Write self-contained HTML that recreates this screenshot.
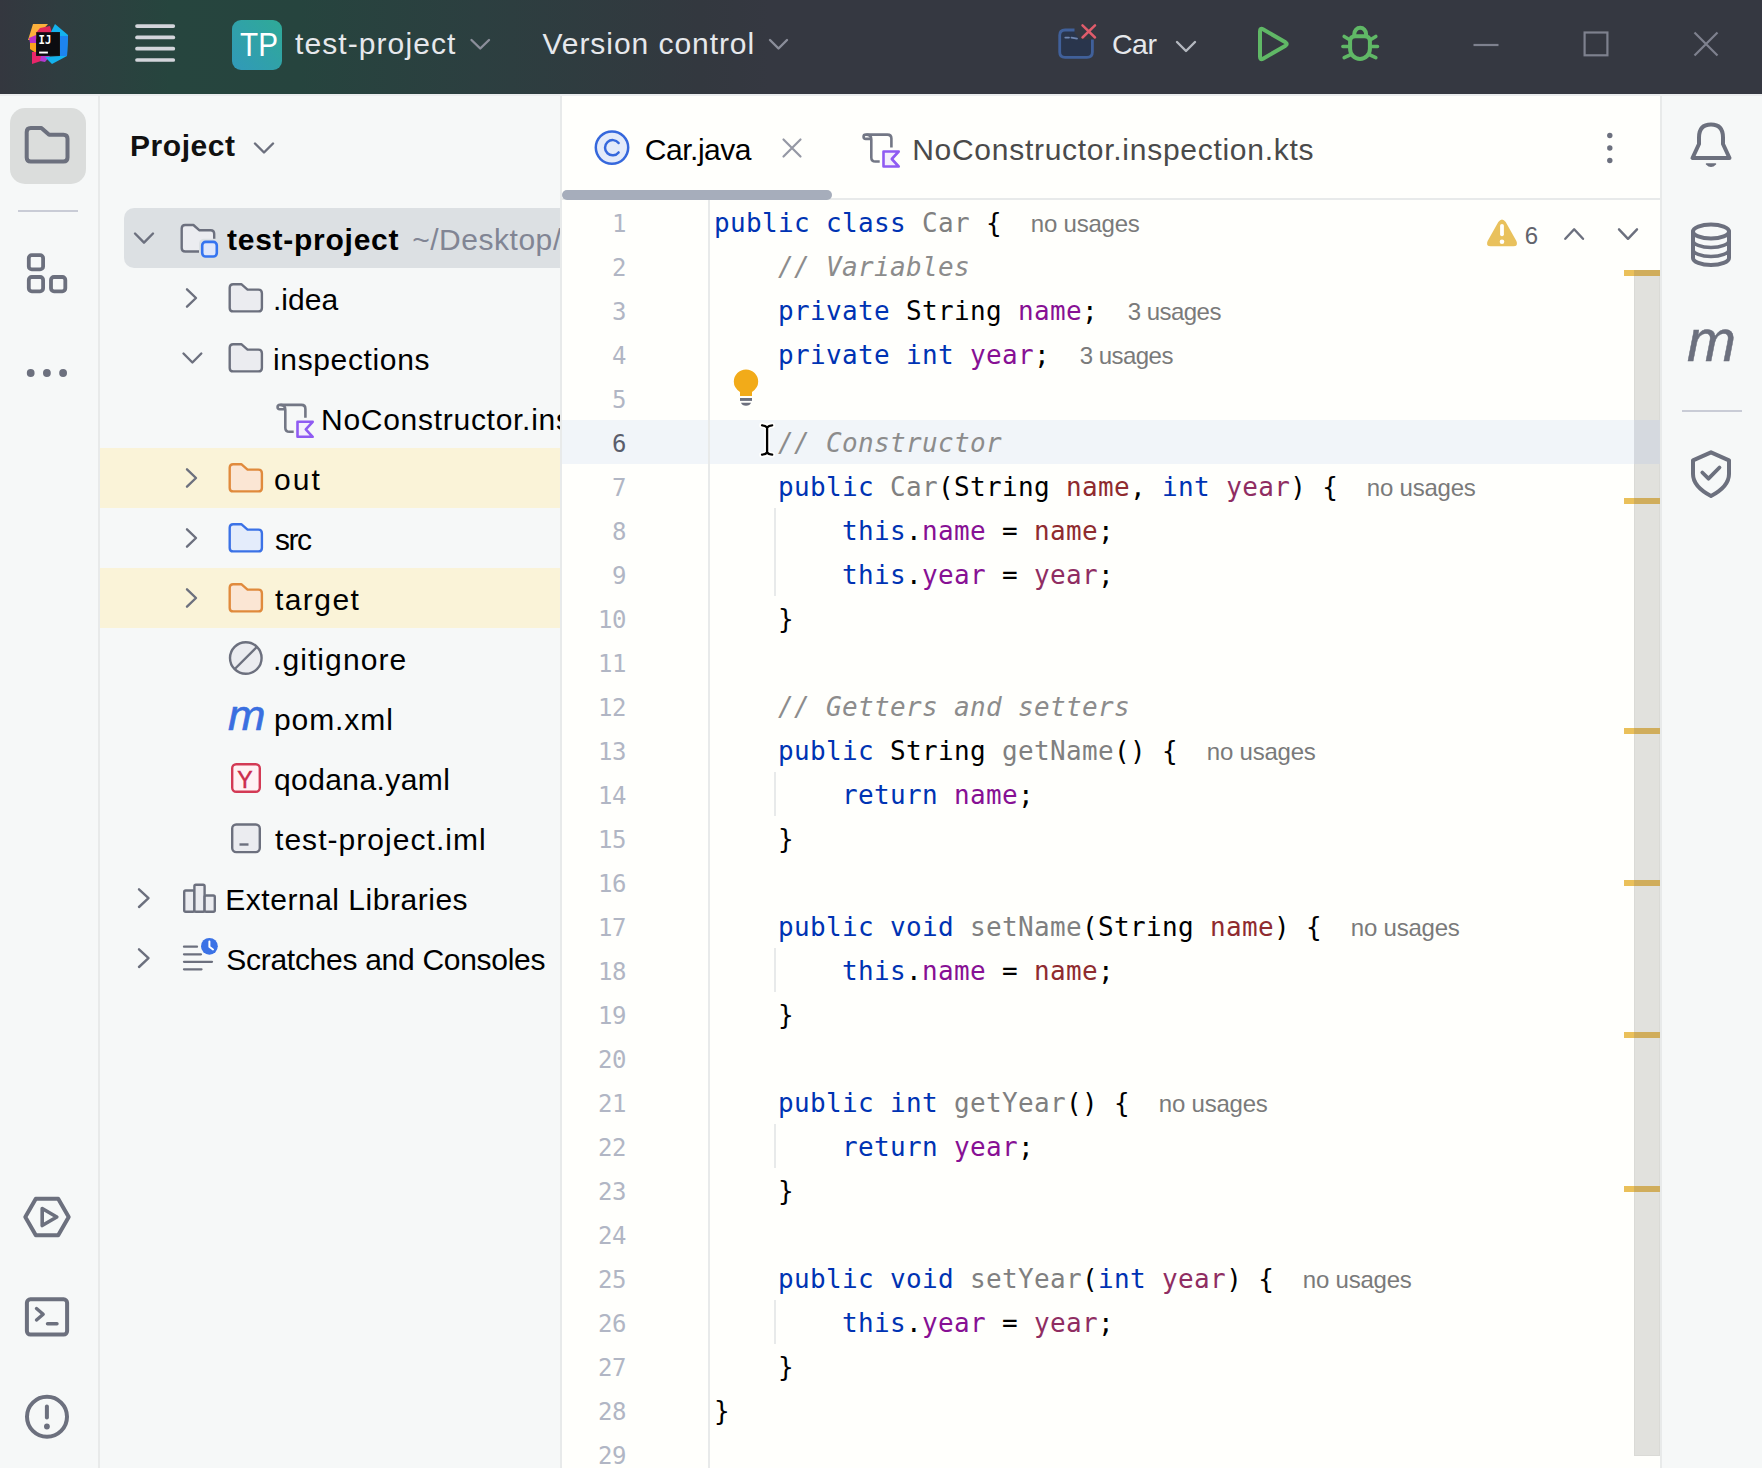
<!DOCTYPE html>
<html lang="en"><head><meta charset="utf-8"><title>test-project – Car.java</title>
<style>
html,body{margin:0;padding:0;}
body{width:1762px;height:1468px;overflow:hidden;position:relative;background:#f6f8f8;font-family:"Liberation Sans","DejaVu Sans",sans-serif;color:#000;}
.a{position:absolute;}
.t{position:absolute;white-space:pre;line-height:1;}
svg{position:absolute;overflow:visible;}
#titlebar{position:absolute;left:0;top:0;width:1762px;height:94px;background:#353841;overflow:hidden;}
#titlebar .grad{position:absolute;left:0;top:0;width:1000px;height:94px;background:linear-gradient(90deg,#34373f 0px,#2f3d40 60px,#26453e 170px,#26443e 300px,#2c3f40 480px,#33383f 700px,#353841 770px);}
.code{position:absolute;left:714px;white-space:pre;line-height:44px;height:44px;font-family:"DejaVu Sans Mono","Liberation Mono",monospace;font-size:26px;letter-spacing:0.348px;color:#000;}
.k{color:#0033b3}.f{color:#871094}.g{color:#808080}.c{color:#8c8c8c;font-style:italic}.pn{color:#8f2b2f}.py{color:#8f2d62}
.ln{position:absolute;white-space:pre;line-height:44px;height:44px;font-family:"DejaVu Sans Mono","Liberation Mono",monospace;font-size:24px;color:#b1b6c4;text-align:right;width:60px;left:566px;margin-top:2px;letter-spacing:-0.4px;}

</style></head><body>
<div id="titlebar"><div class="grad"></div></div>
<svg style="left:27px;top:23px" width="42" height="42" viewBox="27 23 42 42">
<polygon points="33,24 48,24 40,33 36,40 28,40" fill="#fcb03c"/>
<polygon points="30,43 36,43 36,53 30,49" fill="#f9a21c"/>
<polygon points="40,28 50,26 52,33 36,33" fill="#e0285a"/>
<polygon points="29,38 36,35 36,43 30,43" fill="#b830c8"/>
<polygon points="32,52 36,52 36,56 46,56 41,61 32,64" fill="#e8266a"/>
<polygon points="41,56 50,56 45,62 40,61" fill="#b43ad0"/>
<polygon points="55,24 68,35 67,56 52,64 45,57 60,56 60,32 51,32" fill="#14b2ee"/>
<polygon points="60,36 68,36 67,56 60,56" fill="#1d84f0"/>
<rect x="36.2" y="32.2" width="23.6" height="23.6" fill="#0c0c10"/>
<rect x="39.1" y="51.6" width="8.8" height="1.9" fill="#fff"/>
<text x="38.6" y="43.7" font-family="DejaVu Sans Mono,Liberation Mono,monospace" font-weight="bold" font-size="12" fill="#fff" textLength="12.8" lengthAdjust="spacingAndGlyphs">IJ</text>
</svg>
<svg style="left:0;top:0" width="200" height="94"><line x1="137" y1="26.1" x2="173.3" y2="26.1" stroke="#d3d5db" stroke-width="3.7" stroke-linecap="round"/><line x1="137" y1="37.4" x2="173.3" y2="37.4" stroke="#d3d5db" stroke-width="3.7" stroke-linecap="round"/><line x1="137" y1="48.7" x2="173.3" y2="48.7" stroke="#d3d5db" stroke-width="3.7" stroke-linecap="round"/><line x1="137" y1="60" x2="173.3" y2="60" stroke="#d3d5db" stroke-width="3.7" stroke-linecap="round"/></svg>
<div class="a" style="left:232px;top:20px;width:50px;height:50px;border-radius:9px;background:linear-gradient(45deg,#3199b9 0%,#2faa97 100%)"></div>
<div class="t" style='left:239.85px;top:28.00px;font-size:33px;color:#ffffff;transform:scaleX(0.9);transform-origin:left top;'>TP</div>
<div class="t" style='left:295.00px;top:29.00px;font-size:30px;color:#e6e8ec;letter-spacing:1.086px;'>test-project</div>
<div class="t" style='left:542.50px;top:29.00px;font-size:30px;color:#e6e8ec;letter-spacing:0.944px;'>Version control</div>
<svg style="left:0;top:0" width="1762" height="1468"><polyline points="471.5,40 480.25,48.5 489,40" fill="none" stroke="#8b8e9a" stroke-width="2.4" stroke-linecap="round" stroke-linejoin="round"/></svg>
<svg style="left:0;top:0" width="1762" height="1468"><polyline points="770,40 778.5,48.5 787,40" fill="none" stroke="#8b8e9a" stroke-width="2.4" stroke-linecap="round" stroke-linejoin="round"/></svg>
<svg style="left:0;top:0" width="1762" height="94">
<path d="M1074.500 30 L1065 30 Q1059.700 30 1059.700 35.300 L1059.700 52 Q1059.700 57.400 1065 57.400 L1087 57.400 Q1092.400 57.400 1092.400 52 L1092.400 39.500 L1080 39.500 L1074.500 33 Z" fill="#29354c"/>
<path d="M1074.500 30 L1065 30 Q1059.700 30 1059.700 35.300 L1059.700 52 Q1059.700 57.400 1065 57.400 L1087 57.400 Q1092.400 57.400 1092.400 52 L1092.400 39.500" fill="none" stroke="#40609a" stroke-width="2.800" stroke-linecap="butt"/>
<path d="M1065.300 37.600 L1069 37.600 M1071.500 37.600 L1077 38.600" stroke="#6f86b0" stroke-width="1.800" stroke-linecap="round"/>
<path d="M1082.500 25.400 L1095 37.500 M1095 25.400 L1082.500 37.500" stroke="#e05c6b" stroke-width="2.500" stroke-linecap="round"/>
</svg>
<div class="t" style='left:1112.00px;top:30.00px;font-size:28.5px;color:#e6e8ec;letter-spacing:-0.466px;'>Car</div>
<svg style="left:0;top:0" width="1762" height="1468"><polyline points="1177,42 1186.0,51 1195,42" fill="none" stroke="#b4b8bf" stroke-width="2.4" stroke-linecap="round" stroke-linejoin="round"/></svg>
<svg style="left:0;top:0" width="1762" height="94">
<path d="M1260 31.200 Q1260 27.600 1263 29.300 L1285.500 42.300 Q1288 44 1285.500 45.700 L1263 58.700 Q1260 60.400 1260 56.800 Z" fill="none" stroke="#60b866" stroke-width="4" stroke-linejoin="round"/>
</svg>
<svg style="left:0;top:0" width="1762" height="94" fill="none" stroke="#60b866" stroke-width="3.800" stroke-linecap="round">
<path d="M1354.300 36 L1354.300 34 A5.900 6.300 0 0 1 1366.100 34 L1366.100 36" stroke-width="4"/>
<path d="M1350.100 41.500 Q1350.100 36.200 1355.400 36.200 L1364.600 36.200 Q1369.900 36.200 1369.900 41.500 L1369.900 49 A9.900 9.900 0 0 1 1350.100 49 Z" stroke-width="4" stroke-linejoin="round"/>
<path d="M1350 40 L1344.200 36.500 M1370 40 L1375.800 36.500 M1342.900 46.500 L1349.500 46.500 M1370.500 46.500 L1377.500 46.500 M1351.300 54.300 L1344.200 57.700 M1368.700 54.300 L1375.800 57.700" stroke-width="3.600"/>
</svg>
<svg style="left:0;top:0" width="1762" height="94" fill="none" stroke="#7e818e" stroke-width="2.2">
<path d="M1473.500 45 L1498.500 45"/>
<rect x="1584.600" y="32.500" width="22.800" height="22.800"/>
<path d="M1694.500 32.500 L1717.500 55.500 M1717.500 32.500 L1694.500 55.500"/>
</svg>
<div class="a" style="left:0;top:94px;width:1762px;height:2px;background:#ebedee;z-index:2"></div>
<div class="a" style="left:98px;top:95px;width:2px;height:1373px;background:#e8eaea"></div>
<div class="a" style="left:562px;top:95px;width:1098px;height:1373px;background:#fffffc"></div>
<div class="a" style="left:560px;top:95px;width:2px;height:1373px;background:#e8eaea"></div>
<div class="a" style="left:1660px;top:95px;width:2px;height:1373px;background:#e8eaea"></div>
<div class="a" style="left:10px;top:108px;width:76px;height:76px;border-radius:15px;background:#dbdddc"></div>
<svg style="left:0;top:0" width="100" height="1468" fill="none" stroke="#6c707e" stroke-linejoin="round" stroke-linecap="round"><path d="M30.7,128 L41.388,128 L49.092999999999996,134.7 L63.5,134.7 Q67.5,134.7 67.5,138.7 L67.5,157.5 Q67.5,161.5 63.5,161.5 L30.7,161.5 Q26.7,161.5 26.7,157.5 L26.7,132 Q26.7,128 30.7,128 Z" stroke-width="4"/><rect x="28.8" y="255.100" width="14.300" height="14.300" rx="3" stroke-width="3.8"/><rect x="28.8" y="277" width="14.300" height="14.300" rx="3" stroke-width="3.8"/><rect x="51" y="277" width="14.300" height="14.300" rx="3" stroke-width="3.8"/><path d="M25.3 1217 L35.8 1198.800 L58.2 1198.800 L68.7 1217 L58.2 1235.200 L35.8 1235.200 Z" stroke-width="4"/><path d="M42.2 1208.500 L56.8 1217 L42.2 1225.500 Z" stroke-width="3.6"/><rect x="26.900" y="1299.300" width="40.200" height="35.200" rx="3.5" stroke-width="4"/><path d="M36.5 1308.500 L43.2 1314.200 L36.5 1320" stroke-width="3.4"/><path d="M47.5 1323.700 L57 1323.700" stroke-width="3.4"/><circle cx="47" cy="1416.800" r="20" stroke-width="4"/><path d="M46.9 1406.500 L46.9 1417.500" stroke-width="4"/><circle cx="46.9" cy="1426.500" r="2.9" fill="#6c707e" stroke="none"/></svg>
<div class="a" style="left:18px;top:210px;width:60px;height:2px;background:#c9ccd6"></div>
<svg style="left:0;top:0" width="100" height="400"><circle cx="30.700" cy="373" r="3.900" fill="#6c707e"/><circle cx="46.900" cy="373" r="3.900" fill="#6c707e"/><circle cx="63.100" cy="373" r="3.900" fill="#6c707e"/></svg>
<div class="t" style='left:130.00px;top:131.00px;font-size:30px;color:#111;font-weight:bold;letter-spacing:0.548px;'>Project</div>
<svg style="left:0;top:0" width="1762" height="1468"><polyline points="255,143.5 264.0,152.5 273,143.5" fill="none" stroke="#6c707e" stroke-width="2.4" stroke-linecap="round" stroke-linejoin="round"/></svg>
<div class="a" style="left:124px;top:208px;width:436px;height:60px;border-radius:10px 0 0 10px;background:#dce0e3"></div>
<div class="a" style="left:100px;top:448px;width:460px;height:60px;background:#faf3d8"></div>
<div class="a" style="left:100px;top:568px;width:460px;height:60px;background:#faf3d8"></div>
<svg style="left:0;top:0" width="1762" height="1468"><polyline points="135,233.5 144.0,242.7 153,233.5" fill="none" stroke="#6c707e" stroke-width="2.4" stroke-linecap="round" stroke-linejoin="round"/></svg>
<svg style="left:0;top:0" width="600" height="1468"><path d="M185.2,225 L193.39999999999998,225 L199.49499999999998,230.3 L210.7,230.3 Q214.2,230.3 214.2,233.8 L214.2,248.0 Q214.2,251.5 210.7,251.5 L185.2,251.5 Q181.7,251.5 181.7,248.0 L181.7,228.5 Q181.7,225 185.2,225 Z" fill="#ebecf0" stroke="#6c707e" stroke-width="2.4" stroke-linejoin="round"/><rect x="199" y="238.700" width="21" height="21" rx="5" fill="#dce0e3"/><rect x="202.200" y="241.900" width="14.600" height="14.600" rx="3.5" fill="#dfe7fb" stroke="#3574f0" stroke-width="2.600"/></svg>
<div class="t" style='left:227.00px;top:225.00px;font-size:30px;color:#000;font-weight:bold;letter-spacing:0.739px;'>test-project</div>
<div class="t" style='left:412.20px;top:225.00px;font-size:30px;color:#818594;letter-spacing:0.522px;'>~/Desktop</div>
<div class="t" style='left:553.00px;top:225.00px;font-size:30px;color:#818594;width:7.0px;overflow:hidden;'>/test-project</div>
<svg style="left:0;top:0" width="1762" height="1468"><polyline points="187,289.3 196,298.0 187,306.7" fill="none" stroke="#6c707e" stroke-width="2.4" stroke-linecap="round" stroke-linejoin="round"/></svg>
<svg style="left:0;top:0" width="600" height="1468"><path d="M233.2,284.2 L241.292,284.2 L247.548,289.64 L258.4,289.64 Q261.9,289.64 261.9,293.14 L261.9,307.9 Q261.9,311.4 258.4,311.4 L233.2,311.4 Q229.7,311.4 229.7,307.9 L229.7,287.7 Q229.7,284.2 233.2,284.2 Z" fill="#ebecf0" stroke="#6c707e" stroke-width="2.4" stroke-linejoin="round"/></svg>
<div class="t" style='left:273.00px;top:285.00px;font-size:30px;color:#000;letter-spacing:0.008px;'>.idea</div>
<svg style="left:0;top:0" width="1762" height="1468"><polyline points="183.5,353.5 192.4,362.5 201.3,353.5" fill="none" stroke="#6c707e" stroke-width="2.4" stroke-linecap="round" stroke-linejoin="round"/></svg>
<svg style="left:0;top:0" width="600" height="1468"><path d="M233.2,344.2 L241.292,344.2 L247.548,349.64 L258.4,349.64 Q261.9,349.64 261.9,353.14 L261.9,367.9 Q261.9,371.4 258.4,371.4 L233.2,371.4 Q229.7,371.4 229.7,367.9 L229.7,347.7 Q229.7,344.2 233.2,344.2 Z" fill="#ebecf0" stroke="#6c707e" stroke-width="2.4" stroke-linejoin="round"/></svg>
<div class="t" style='left:273.00px;top:345.00px;font-size:30px;color:#000;letter-spacing:0.641px;'>inspections</div>
<svg style="left:0;top:0" width="1762" height="1468" fill="none" stroke-linejoin="round" stroke-linecap="butt"><path d="M285.30,409.20 L279.70,409.20 A2.15 2.15 0 0 1 279.70,404.90 L301.40,404.90 Q305.40,404.90 305.40,408.90 L305.40,417.80" stroke="#737785" stroke-width="2.600"/><path d="M280.50,404.90 Q285.30,404.90 285.30,409.70 L285.30,427.70 Q285.30,431.80 289.40,431.80 L293.70,431.80" stroke="#737785" stroke-width="2.600"/><path d="M297.50,421.80 L312.70,421.80 L305.80,429.30 L312.70,436.80 L297.50,436.80 Z" fill="#f4effc" stroke="#8f5bf2" stroke-width="2.600"/></svg>
<div class="t" style='left:321.00px;top:405.00px;font-size:30px;color:#000;letter-spacing:0.721px;width:239.0px;overflow:hidden;'>NoConstructor.inspection.kts</div>
<svg style="left:0;top:0" width="1762" height="1468"><polyline points="187,469.3 196,478.0 187,486.7" fill="none" stroke="#6c707e" stroke-width="2.4" stroke-linecap="round" stroke-linejoin="round"/></svg>
<svg style="left:0;top:0" width="600" height="1468"><path d="M233.2,464.2 L241.292,464.2 L247.548,469.64 L258.4,469.64 Q261.9,469.64 261.9,473.14 L261.9,487.9 Q261.9,491.4 258.4,491.4 L233.2,491.4 Q229.7,491.4 229.7,487.9 L229.7,467.7 Q229.7,464.2 233.2,464.2 Z" fill="#fbe6d4" stroke="#e08a3c" stroke-width="2.4" stroke-linejoin="round"/></svg>
<div class="t" style='left:274.00px;top:465.00px;font-size:30px;color:#000;letter-spacing:2.065px;'>out</div>
<svg style="left:0;top:0" width="1762" height="1468"><polyline points="187,529.3 196,538.0 187,546.7" fill="none" stroke="#6c707e" stroke-width="2.4" stroke-linecap="round" stroke-linejoin="round"/></svg>
<svg style="left:0;top:0" width="600" height="1468"><path d="M233.2,524.2 L241.292,524.2 L247.548,529.6400000000001 L258.4,529.6400000000001 Q261.9,529.6400000000001 261.9,533.1400000000001 L261.9,547.9000000000001 Q261.9,551.4000000000001 258.4,551.4000000000001 L233.2,551.4000000000001 Q229.7,551.4000000000001 229.7,547.9000000000001 L229.7,527.7 Q229.7,524.2 233.2,524.2 Z" fill="#e4ecfb" stroke="#3b72e6" stroke-width="2.4" stroke-linejoin="round"/></svg>
<div class="t" style='left:275.00px;top:525.00px;font-size:30px;color:#000;letter-spacing:-1.495px;'>src</div>
<svg style="left:0;top:0" width="1762" height="1468"><polyline points="187,589.3 196,598.0 187,606.7" fill="none" stroke="#6c707e" stroke-width="2.4" stroke-linecap="round" stroke-linejoin="round"/></svg>
<svg style="left:0;top:0" width="600" height="1468"><path d="M233.2,584.2 L241.292,584.2 L247.548,589.6400000000001 L258.4,589.6400000000001 Q261.9,589.6400000000001 261.9,593.1400000000001 L261.9,607.9000000000001 Q261.9,611.4000000000001 258.4,611.4000000000001 L233.2,611.4000000000001 Q229.7,611.4000000000001 229.7,607.9000000000001 L229.7,587.7 Q229.7,584.2 233.2,584.2 Z" fill="#fbe6d4" stroke="#e08a3c" stroke-width="2.4" stroke-linejoin="round"/></svg>
<div class="t" style='left:275.00px;top:585.00px;font-size:30px;color:#000;letter-spacing:1.424px;'>target</div>
<svg style="left:0;top:0" width="600" height="1468"><circle cx="245.800" cy="658" r="15.800" fill="#ebecf0" stroke="#6c707e" stroke-width="2.400"/><path d="M234.800 669 L256.800 647" stroke="#6c707e" stroke-width="2.400"/></svg>
<div class="t" style='left:273.00px;top:645.00px;font-size:30px;color:#000;letter-spacing:1.086px;'>.gitignore</div>
<div class="t" style='left:227.60px;top:695.00px;font-size:42px;color:#3a6fe0;font-style:italic;transform:scaleX(1.07);transform-origin:left top;-webkit-text-stroke:0.6px #3a6fe0;'>m</div>
<div class="t" style='left:274.00px;top:705.00px;font-size:30px;color:#000;letter-spacing:0.919px;'>pom.xml</div>
<svg style="left:0;top:0" width="600" height="1468"><rect x="232.200" y="764.200" width="27.600" height="27.600" rx="4" fill="#fff2f4" stroke="#d33a55" stroke-width="2.400"/></svg>
<div class="t" style='left:237.30px;top:768.60px;font-size:23px;color:#cc2d4e;-webkit-text-stroke:0.5px #cc2d4e;'>Y</div>
<div class="t" style='left:274.00px;top:765.00px;font-size:30px;color:#000;letter-spacing:0.408px;'>qodana.yaml</div>
<svg style="left:0;top:0" width="600" height="1468"><rect x="232.200" y="824.500" width="27.600" height="27.600" rx="4" fill="#ebecf0" stroke="#6c707e" stroke-width="2.400"/><path d="M239.500 844.500 L248.500 844.500" stroke="#6c707e" stroke-width="2.400"/></svg>
<div class="t" style='left:275.00px;top:825.00px;font-size:30px;color:#000;letter-spacing:1.041px;'>test-project.iml</div>
<svg style="left:0;top:0" width="1762" height="1468"><polyline points="139,889.3 148.5,898.15 139,907" fill="none" stroke="#6c707e" stroke-width="2.4" stroke-linecap="round" stroke-linejoin="round"/></svg>
<svg style="left:0;top:0" width="600" height="1468" fill="#ebecf0" stroke="#6c707e" stroke-width="2.400" stroke-linejoin="round"><rect x="184.200" y="890.500" width="10.200" height="21.200" rx="1.5"/><rect x="194.400" y="884.700" width="10.200" height="27" rx="1.5"/><rect x="204.600" y="895.500" width="10.200" height="16.200" rx="1.5"/></svg>
<div class="t" style='left:225.30px;top:885.00px;font-size:30px;color:#000;letter-spacing:0.521px;'>External Libraries</div>
<svg style="left:0;top:0" width="1762" height="1468"><polyline points="139,949.3 148.5,958.15 139,967" fill="none" stroke="#6c707e" stroke-width="2.4" stroke-linecap="round" stroke-linejoin="round"/></svg>
<svg style="left:0;top:0" width="600" height="1468" fill="none" stroke="#6c707e" stroke-width="2.300" stroke-linecap="round"><path d="M184 946.700 L197 946.700 M184 954.300 L201 954.300 M184 961.800 L212 961.800 M184 969.300 L201.500 969.300"/><circle cx="209.400" cy="946.300" r="10.400" fill="#f6f8f8" stroke="none"/><circle cx="209.400" cy="946.300" r="8.400" fill="#3b72e6" stroke="none"/><path d="M209.400 941.500 L209.400 946.800 L213 949.500" stroke="#fff" stroke-width="2"/></svg>
<div class="t" style='left:226.30px;top:945.00px;font-size:30px;color:#000;letter-spacing:-0.285px;'>Scratches and Consoles</div>
<div class="a" style="left:562px;top:198px;width:1098px;height:2px;background:#e8eaea"></div>
<div class="a" style="left:562px;top:190px;width:270px;height:10px;border-radius:5px;background:#a6adbb"></div>
<svg style="left:0;top:0" width="1762" height="200"><circle cx="612" cy="147.600" r="16.200" fill="#e4ebfa" stroke="#3668dc" stroke-width="2.500"/><path d="M618.600 143 A7.600 7.600 0 1 0 618.600 152.400" fill="none" stroke="#3668dc" stroke-width="2.500" stroke-linecap="round"/></svg>
<div class="t" style='left:644.80px;top:135.00px;font-size:30px;color:#000;letter-spacing:-0.481px;'>Car.java</div>
<svg style="left:0;top:0" width="1762" height="200"><path d="M783.500 139.500 L800.500 156.500 M800.500 139.500 L783.500 156.500" stroke="#9598a4" stroke-width="2.200" stroke-linecap="round"/></svg>
<svg style="left:0;top:0" width="1762" height="1468" fill="none" stroke-linejoin="round" stroke-linecap="butt"><path d="M871.30,138.90 L865.70,138.90 A2.15 2.15 0 0 1 865.70,134.60 L887.40,134.60 Q891.40,134.60 891.40,138.60 L891.40,147.50" stroke="#737785" stroke-width="2.600"/><path d="M866.50,134.60 Q871.30,134.60 871.30,139.40 L871.30,157.40 Q871.30,161.50 875.40,161.50 L879.70,161.50" stroke="#737785" stroke-width="2.600"/><path d="M883.50,151.50 L898.70,151.50 L891.80,159.00 L898.70,166.50 L883.50,166.50 Z" fill="#f4effc" stroke="#8f5bf2" stroke-width="2.600"/></svg>
<div class="t" style='left:912.20px;top:135.00px;font-size:30px;color:#4a4a4a;letter-spacing:0.721px;'>NoConstructor.inspection.kts</div>
<svg style="left:0;top:0" width="1762" height="200"><circle cx="1609.800" cy="135.500" r="2.700" fill="#6c707e"/><circle cx="1609.800" cy="148" r="2.700" fill="#6c707e"/><circle cx="1609.800" cy="160.500" r="2.700" fill="#6c707e"/></svg>
<svg style="left:0;top:0" width="1762" height="600" fill="none" stroke="#6c707e" stroke-width="4" stroke-linejoin="round" stroke-linecap="round">
<path d="M1692.500 158 L1729.500 158 L1723 144 L1723 137.500 Q1723 124.500 1711 124.500 Q1699 124.500 1699 137.500 L1699 144 Z"/>
<path d="M1706.500 164 Q1711 168.500 1715.500 164 Z" fill="#6c707e" stroke-width="1.5"/>
<ellipse cx="1711" cy="231.500" rx="18" ry="7"/>
<path d="M1693 231.500 L1693 258 A18 7 0 0 0 1729 258 L1729 231.500"/>
<path d="M1693 240.500 A18 7 0 0 0 1729 240.500 M1693 249.500 A18 7 0 0 0 1729 249.500" stroke-width="3.500"/>
<path d="M1682 411 L1742 411" stroke="#c9ccd6" stroke-width="2" stroke-linecap="butt"/>
<path d="M1711 452.300 L1729 460.300 L1729 474 Q1729 486.500 1711 496 Q1693 486.500 1693 474 L1693 460.300 Z"/>
<path d="M1702.300 472.500 L1708.500 478.700 L1719.500 467.500" stroke-width="3.800"/>
</svg>
<div class="t" style='left:1686.50px;top:311.00px;font-size:60px;color:#6c707e;font-style:italic;transform:scaleX(0.98);transform-origin:left top;-webkit-text-stroke:0.5px #6c707e;'>m</div>
<div class="a" style="left:562px;top:420px;width:1098px;height:44px;background:#f1f5f9"></div>
<div class="a" style="left:708px;top:200px;width:2px;height:1268px;background:#e8eaea"></div>
<div class="a" style="left:1634px;top:270px;width:26px;height:1186px;background:#e1e1dd;box-shadow:inset 0 0 0 1px #dadad6"></div>
<div class="a" style="left:1634px;top:420px;width:26px;height:44px;background:#d5d9df"></div>
<div class="a" style="left:1624px;top:270px;width:10px;height:6px;background:#eac05a"></div><div class="a" style="left:1634px;top:270px;width:26px;height:6px;background:#d0ad5c"></div>
<div class="a" style="left:1624px;top:498px;width:10px;height:6px;background:#eac05a"></div><div class="a" style="left:1634px;top:498px;width:26px;height:6px;background:#d0ad5c"></div>
<div class="a" style="left:1624px;top:728px;width:10px;height:6px;background:#eac05a"></div><div class="a" style="left:1634px;top:728px;width:26px;height:6px;background:#d0ad5c"></div>
<div class="a" style="left:1624px;top:880px;width:10px;height:6px;background:#eac05a"></div><div class="a" style="left:1634px;top:880px;width:26px;height:6px;background:#d0ad5c"></div>
<div class="a" style="left:1624px;top:1032px;width:10px;height:6px;background:#eac05a"></div><div class="a" style="left:1634px;top:1032px;width:26px;height:6px;background:#d0ad5c"></div>
<div class="a" style="left:1624px;top:1186px;width:10px;height:6px;background:#eac05a"></div><div class="a" style="left:1634px;top:1186px;width:26px;height:6px;background:#d0ad5c"></div>
<div class="a" style="left:774px;top:508px;width:2px;height:88px;background:#e8eaea"></div>
<div class="a" style="left:774px;top:772px;width:2px;height:44px;background:#e8eaea"></div>
<div class="a" style="left:774px;top:948px;width:2px;height:44px;background:#e8eaea"></div>
<div class="a" style="left:774px;top:1124px;width:2px;height:44px;background:#e8eaea"></div>
<div class="a" style="left:774px;top:1300px;width:2px;height:44px;background:#e8eaea"></div>
<div class="ln" style="top:200px;color:#b1b6c4">1</div>
<div class="code" style="top:201px"><span class="k">public class</span> <span class="g">Car</span> {</div>
<div class="t" style='left:1030.80px;top:212.00px;font-size:24px;color:#7a7a7a;letter-spacing:-0.219px;'>no usages</div>
<div class="ln" style="top:244px;color:#b1b6c4">2</div>
<div class="code" style="top:245px">    <span class="c">// Variables</span></div>
<div class="ln" style="top:288px;color:#b1b6c4">3</div>
<div class="code" style="top:289px">    <span class="k">private</span> String <span class="f">name</span>;</div>
<div class="t" style='left:1127.80px;top:300.00px;font-size:24px;color:#7a7a7a;letter-spacing:-0.544px;'>3 usages</div>
<div class="ln" style="top:332px;color:#b1b6c4">4</div>
<div class="code" style="top:333px">    <span class="k">private int</span> <span class="f">year</span>;</div>
<div class="t" style='left:1079.80px;top:344.00px;font-size:24px;color:#7a7a7a;letter-spacing:-0.544px;'>3 usages</div>
<div class="ln" style="top:376px;color:#b1b6c4">5</div>
<div class="ln" style="top:420px;color:#5a5d6b">6</div>
<div class="code" style="top:421px">    <span class="c">// Constructor</span></div>
<div class="ln" style="top:464px;color:#b1b6c4">7</div>
<div class="code" style="top:465px">    <span class="k">public</span> <span class="g">Car</span>(String <span class="pn">name</span>, <span class="k">int</span> <span class="py">year</span>) {</div>
<div class="t" style='left:1366.80px;top:476.00px;font-size:24px;color:#7a7a7a;letter-spacing:-0.219px;'>no usages</div>
<div class="ln" style="top:508px;color:#b1b6c4">8</div>
<div class="code" style="top:509px">        <span class="k">this</span>.<span class="f">name</span> = <span class="pn">name</span>;</div>
<div class="ln" style="top:552px;color:#b1b6c4">9</div>
<div class="code" style="top:553px">        <span class="k">this</span>.<span class="f">year</span> = <span class="py">year</span>;</div>
<div class="ln" style="top:596px;color:#b1b6c4">10</div>
<div class="code" style="top:597px">    }</div>
<div class="ln" style="top:640px;color:#b1b6c4">11</div>
<div class="ln" style="top:684px;color:#b1b6c4">12</div>
<div class="code" style="top:685px">    <span class="c">// Getters and setters</span></div>
<div class="ln" style="top:728px;color:#b1b6c4">13</div>
<div class="code" style="top:729px">    <span class="k">public</span> String <span class="g">getName</span>() {</div>
<div class="t" style='left:1206.80px;top:740.00px;font-size:24px;color:#7a7a7a;letter-spacing:-0.219px;'>no usages</div>
<div class="ln" style="top:772px;color:#b1b6c4">14</div>
<div class="code" style="top:773px">        <span class="k">return</span> <span class="f">name</span>;</div>
<div class="ln" style="top:816px;color:#b1b6c4">15</div>
<div class="code" style="top:817px">    }</div>
<div class="ln" style="top:860px;color:#b1b6c4">16</div>
<div class="ln" style="top:904px;color:#b1b6c4">17</div>
<div class="code" style="top:905px">    <span class="k">public void</span> <span class="g">setName</span>(String <span class="pn">name</span>) {</div>
<div class="t" style='left:1350.80px;top:916.00px;font-size:24px;color:#7a7a7a;letter-spacing:-0.219px;'>no usages</div>
<div class="ln" style="top:948px;color:#b1b6c4">18</div>
<div class="code" style="top:949px">        <span class="k">this</span>.<span class="f">name</span> = <span class="pn">name</span>;</div>
<div class="ln" style="top:992px;color:#b1b6c4">19</div>
<div class="code" style="top:993px">    }</div>
<div class="ln" style="top:1036px;color:#b1b6c4">20</div>
<div class="ln" style="top:1080px;color:#b1b6c4">21</div>
<div class="code" style="top:1081px">    <span class="k">public int</span> <span class="g">getYear</span>() {</div>
<div class="t" style='left:1158.80px;top:1092.00px;font-size:24px;color:#7a7a7a;letter-spacing:-0.219px;'>no usages</div>
<div class="ln" style="top:1124px;color:#b1b6c4">22</div>
<div class="code" style="top:1125px">        <span class="k">return</span> <span class="f">year</span>;</div>
<div class="ln" style="top:1168px;color:#b1b6c4">23</div>
<div class="code" style="top:1169px">    }</div>
<div class="ln" style="top:1212px;color:#b1b6c4">24</div>
<div class="ln" style="top:1256px;color:#b1b6c4">25</div>
<div class="code" style="top:1257px">    <span class="k">public void</span> <span class="g">setYear</span>(<span class="k">int</span> <span class="py">year</span>) {</div>
<div class="t" style='left:1302.80px;top:1268.00px;font-size:24px;color:#7a7a7a;letter-spacing:-0.219px;'>no usages</div>
<div class="ln" style="top:1300px;color:#b1b6c4">26</div>
<div class="code" style="top:1301px">        <span class="k">this</span>.<span class="f">year</span> = <span class="py">year</span>;</div>
<div class="ln" style="top:1344px;color:#b1b6c4">27</div>
<div class="code" style="top:1345px">    }</div>
<div class="ln" style="top:1388px;color:#b1b6c4">28</div>
<div class="code" style="top:1389px">}</div>
<div class="ln" style="top:1432px;color:#b1b6c4">29</div>
<svg style="left:0;top:0" width="1762" height="300">
<path d="M1498.300 222 Q1502 216.800 1505.700 222 L1516.400 241 Q1518.600 246.300 1513.300 246.300 L1490.700 246.300 Q1485.400 246.300 1487.600 241 Z" fill="#e9c15c"/>
<path d="M1502 225.800 L1502 234.300" stroke="#fff" stroke-width="3.800" stroke-linecap="round"/><circle cx="1502" cy="241.700" r="2.300" fill="#fff"/>
</svg>
<div class="t" style='left:1524.80px;top:223.80px;font-size:24px;color:#62646c;'>6</div>
<svg style="left:0;top:0" width="1762" height="1468"><polyline points="1565.3,238.8 1574.15,229.3 1583,238.8" fill="none" stroke="#6c707e" stroke-width="2.4" stroke-linecap="round" stroke-linejoin="round"/></svg>
<svg style="left:0;top:0" width="1762" height="1468"><polyline points="1619,229.3 1628.0,238.8 1637,229.3" fill="none" stroke="#6c707e" stroke-width="2.4" stroke-linecap="round" stroke-linejoin="round"/></svg>
<svg style="left:0;top:0" width="1762" height="500">
<path d="M740 396 L740 392 Q733.800 388 733.800 381.600 A12.200 12.200 0 0 1 758.200 381.600 Q758.200 388 752 392 L752 396 Z" fill="#f2ab19"/>
<rect x="740" y="398" width="12" height="2.900" fill="#6c707e"/>
<path d="M741 402.800 L751 402.800 Q750 405.800 746 405.800 Q742 405.800 741 402.800 Z" fill="#6c707e"/>
</svg>
<svg style="left:0;top:0" width="1762" height="500" fill="none" stroke-linecap="round" stroke-linejoin="round">
<path d="M762 425.300 Q765.500 425.300 767.100 427.500 Q768.700 425.300 772.200 425.300 M767.100 427.500 L767.100 452.500 M762 454.700 Q765.500 454.700 767.100 452.500 Q768.700 454.700 772.200 454.700" stroke="#fff" stroke-width="5.600"/>
<path d="M762 425.300 Q765.500 425.300 767.100 427.500 Q768.700 425.300 772.200 425.300 M767.100 427.500 L767.100 452.500 M762 454.700 Q765.500 454.700 767.100 452.500 Q768.700 454.700 772.200 454.700" stroke="#000" stroke-width="2.300"/>
</svg>
</body></html>
